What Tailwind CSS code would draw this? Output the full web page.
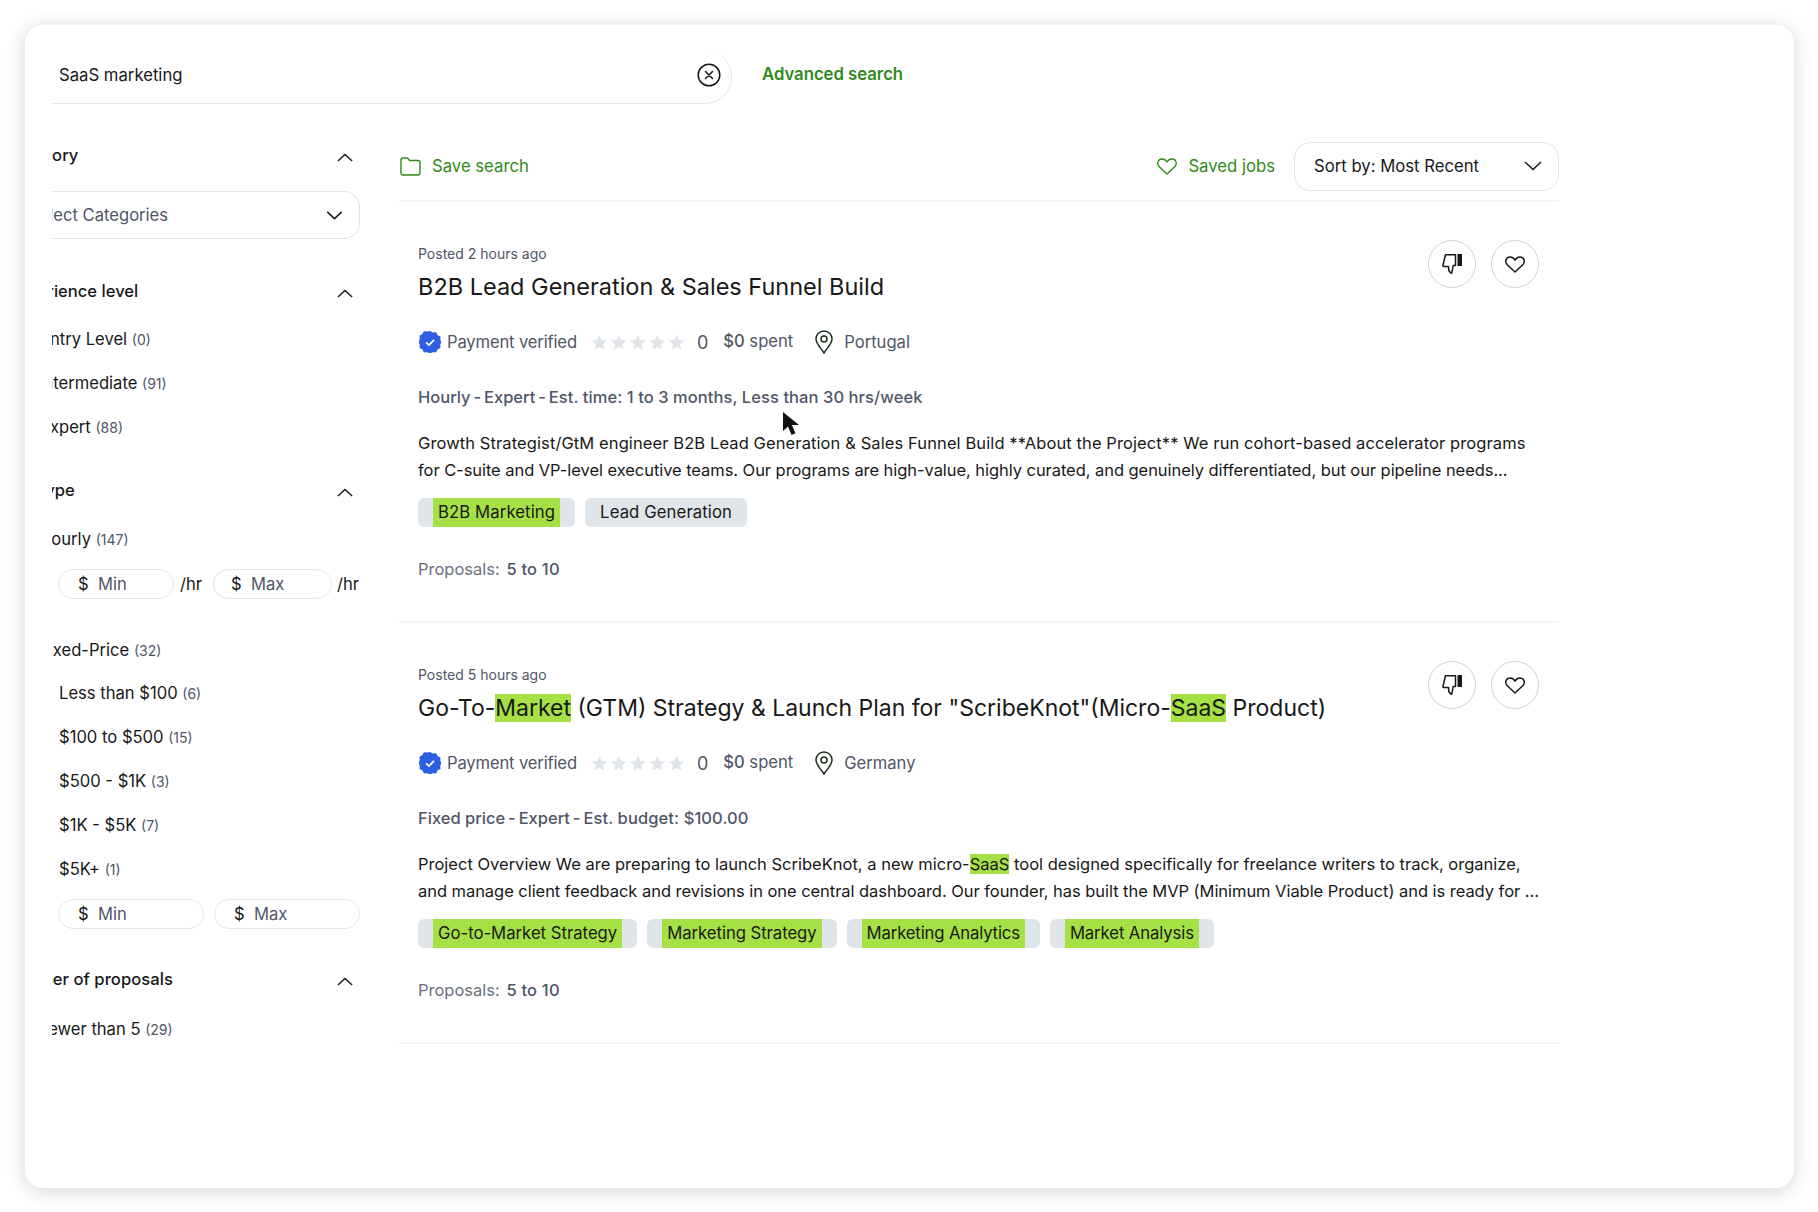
<!DOCTYPE html>
<html lang="en">
<head>
    <meta charset="UTF-8">
    <title>Job search</title>
    <script src="https://cdn.jsdelivr.net/npm/@tailwindcss/browser@4"></script>
</head>
<body class="bg-white font-[Inter,sans-serif] text-[#181818] overflow-hidden">
<div class="relative w-[1818px] h-[1212px] pt-[25px] pl-[25px]">
    <div class="w-[1769px] h-[1163px] bg-white rounded-[18px] shadow-[0_3px_20px_rgba(0,0,0,0.17)] pl-[27px]">

        <!-- Search -->
        <div class="pt-[25px] flex items-start">
            <div class="w-[680px] h-[54px] pb-[3px] border-b border-r border-[#e4e6ea] rounded-br-[28px] rounded-tr-[28px] flex items-center justify-between pl-[7px] pr-[10px]">
                <span class="text-[16.7px] translate-y-[1px]">SaaS marketing</span>
                <svg class="w-[24px] h-[24px]" viewBox="0 0 24 24" fill="none" stroke="#181818" stroke-width="1.5" stroke-linecap="round"><circle cx="12" cy="12" r="10.8"/><path d="M8.500 8.500l7 7M15.500 8.500l-7 7"/></svg>
            </div>
            <a class="ml-[30px] h-[50px] flex items-center text-[16.7px] font-semibold text-[#2f8a1a]">Advanced search</a>
        </div>

        <div class="flex">
            <!-- Filters -->
            <aside class="w-[308px] overflow-hidden shrink-0 pt-[39px] text-[16.6px]">
                <div class="h-6 flex items-center justify-between pr-[7px]">
                    <span class="-ml-[47px] font-medium">Category</span>
                    <svg class="w-[16px] h-[9px] translate-y-[2px]" viewBox="0 0 18 10" fill="none" stroke="#181818" stroke-width="1.600"><path d="M1 9l8-7.500L17 9"/></svg>
                </div>
                <div class="mt-6 h-[48px] border border-l-0 border-[#e4e6ea] rounded-r-2xl flex items-center justify-between pr-[16px] text-[#4f5668]">
                    <span class="-ml-[23px]">Select Categories</span>
                    <svg class="w-[17px] h-[9px]" viewBox="0 0 18 10" fill="none" stroke="#181818" stroke-width="1.600"><path d="M1 1l8 7.500L17 1"/></svg>
                </div>

                <div class="mt-[40px] h-6 flex items-center justify-between pr-[7px]">
                    <span class="-ml-[44px] font-medium">Experience level</span>
                    <svg class="w-[16px] h-[9px] translate-y-[2px]" viewBox="0 0 18 10" fill="none" stroke="#181818" stroke-width="1.600"><path d="M1 9l8-7.500L17 9"/></svg>
                </div>
                <div class="mt-6 h-6 flex items-center"><span class="-ml-[12px]">Entry Level <span class="text-[14px] text-[#4f5668]">(0)</span></span></div>
                <div class="mt-5 h-6 flex items-center"><span class="-ml-[13px]">Intermediate <span class="text-[14px] text-[#4f5668]">(91)</span></span></div>
                <div class="mt-5 h-6 flex items-center"><span class="-ml-[12px]">Expert <span class="text-[14px] text-[#4f5668]">(88)</span></span></div>

                <div class="mt-[39px] h-6 flex items-center justify-between pr-[7px]">
                    <span class="-ml-[47px] font-medium">Job type</span>
                    <svg class="w-[16px] h-[9px] translate-y-[2px]" viewBox="0 0 18 10" fill="none" stroke="#181818" stroke-width="1.600"><path d="M1 9l8-7.500L17 9"/></svg>
                </div>
                <div class="mt-[25px] h-6 flex items-center"><span class="-ml-[13px]">Hourly <span class="text-[14px] text-[#4f5668]">(147)</span></span></div>
                <div class="mt-[18px] pl-[6px] flex items-center h-[30px]">
                    <div class="w-[116px] h-[30px] border border-[#e4e6ea] rounded-full flex items-center pl-[19px] text-[#4f5668]"><span class="text-[#181818] w-[20px]">$</span>Min</div>
                    <span class="ml-[6px] w-[33px]">/hr</span>
                    <div class="w-[119px] h-[30px] border border-[#e4e6ea] rounded-full flex items-center pl-[17px] text-[#4f5668]"><span class="text-[#181818] w-[20px]">$</span>Max</div>
                    <span class="ml-[5px]">/hr</span>
                </div>
                <div class="mt-[39px] h-6 flex items-center"><span class="-ml-[13px]">Fixed-Price <span class="text-[14px] text-[#4f5668]">(32)</span></span></div>
                <div class="mt-[19px] h-6 flex items-center pl-[7px]"><span>Less than $100 <span class="text-[14px] text-[#4f5668]">(6)</span></span></div>
                <div class="mt-5 h-6 flex items-center pl-[7px]"><span>$100 to $500 <span class="text-[14px] text-[#4f5668]">(15)</span></span></div>
                <div class="mt-5 h-6 flex items-center pl-[7px]"><span>$500 - $1K <span class="text-[14px] text-[#4f5668]">(3)</span></span></div>
                <div class="mt-5 h-6 flex items-center pl-[7px]"><span>$1K - $5K <span class="text-[14px] text-[#4f5668]">(7)</span></span></div>
                <div class="mt-5 h-6 flex items-center pl-[7px]"><span>$5K+ <span class="text-[14px] text-[#4f5668]">(1)</span></span></div>
                <div class="mt-[18px] pl-[6px] flex items-center gap-[10px] h-[30px]">
                    <div class="w-[146px] h-[30px] border border-[#e4e6ea] rounded-full flex items-center pl-[19px] text-[#4f5668]"><span class="text-[#181818] w-[20px]">$</span>Min</div>
                    <div class="w-[146px] h-[30px] border border-[#e4e6ea] rounded-full flex items-center pl-[19px] text-[#4f5668]"><span class="text-[#181818] w-[20px]">$</span>Max</div>
                </div>
                <div class="mt-[38px] h-6 flex items-center justify-between pr-[7px]">
                    <span class="-ml-[47px] font-medium tracking-[0.05px]">Number of proposals</span>
                    <svg class="w-[16px] h-[9px] translate-y-[2px]" viewBox="0 0 18 10" fill="none" stroke="#181818" stroke-width="1.600"><path d="M1 9l8-7.500L17 9"/></svg>
                </div>
                <div class="mt-[26px] h-6 flex items-center"><span class="-ml-[13px]">Fewer than 5 <span class="text-[14px] text-[#4f5668]">(29)</span></span></div>
            </aside>

            <!-- Results -->
            <main class="ml-[39px] w-[1160px] shrink-0">
                <div class="mt-[38px] h-[60px] pb-[10px] border-b-2 border-[#f4f4f5] flex items-center text-[16.7px] text-[#2f8a1a]">
                    <svg class="w-[21px] h-[19px] ml-[1px]" viewBox="0 0 21 19" fill="none" stroke="#2f8a1a" stroke-width="1.400" stroke-linejoin="round"><path d="M1 3.200C1 1.900 1.800 1 3 1h3.600c.9 0 1.500.4 2 1.100l.9 1.400H18c1.200 0 2 .8 2 2V15.600c0 1.400-.9 2.400-2.300 2.400H3.300C1.900 18 1 17 1 15.600V3.200z"/></svg>
                    <span class="ml-[11px] translate-y-[1px]">Save search</span>
                    <svg class="ml-auto w-[20px] h-[17px]" viewBox="0 0 20 17" fill="none" stroke="#2f8a1a" stroke-width="1.400" stroke-linejoin="round"><path d="M10 16L2 8.500C-.5 5.500 1 1 5 1c2.300 0 4 1.300 5 3 1-1.700 2.700-3 5-3 4 0 5.500 4.500 3 7.500L10 16z"/></svg>
                    <span class="ml-[11px] translate-y-[1px]">Saved jobs</span>
                    <div class="ml-[19px] w-[265px] h-[49px] border border-[#e4e6ea] rounded-2xl flex items-center justify-between pl-[19px] pr-[16px] text-[#181818]">
                        <span class="translate-y-[1px]">Sort by: Most Recent</span>
                        <svg class="w-[18px] h-[10px]" viewBox="0 0 18 10" fill="none" stroke="#181818" stroke-width="1.500"><path d="M1 1l8 7.500L17 1"/></svg>
                    </div>
                </div>

                <!-- Job 1 -->
                <article class="h-[421px] border-b-2 border-[#f4f4f5] pt-[38px] pl-[19px] pr-[20px]">
                    <div class="flex justify-between h-[64px]">
                        <div class="pt-[4px]">
                            <p class="h-5 leading-5 text-[14px] text-[#4f5668]">Posted 2 hours ago</p>
                            <h2 class="mt-[6px] h-[34px] leading-[34px] text-[23.5px]">B2B Lead Generation &amp; Sales Funnel Build</h2>
                        </div>
                        <div class="flex gap-[15px]">
                            <div class="w-[48px] h-[48px] rounded-full border border-[#cdd3db] flex items-center justify-center"><svg class="w-[20px] h-[21px]" viewBox="0 0 20 21" fill="none" stroke="#181818" stroke-width="1.500" stroke-linejoin="round"><path d="M3.500.8H13.500V11.500H11.200c-.6 2.500-.7 4.500-1.600 7.800-1.500-.6-3-2.400-3-4.500V12.400H1.600c-.5 0-.8-.4-.7-.9L3.500.8z"/><rect x="15.500" y="0" width="4.500" height="12" fill="#181818" stroke="none"/></svg></div>
                            <div class="w-[48px] h-[48px] rounded-full border border-[#cdd3db] flex items-center justify-center"><svg class="w-[20px] h-[17px]" viewBox="0 0 20 17" fill="none" stroke="#181818" stroke-width="1.500" stroke-linejoin="round"><path d="M10 16L2 8.500C-.5 5.500 1 1 5 1c2.300 0 4 1.300 5 3 1-1.700 2.700-3 5-3 4 0 5.500 4.500 3 7.500L10 16z"/></svg></div>
                        </div>
                    </div>
                    <div class="mt-[26px] h-6 flex items-center text-[16.6px] text-[#4f5668]">
                        <svg class="w-[22px] h-[22px] ml-[1px]" viewBox="0 0 22 22"><path fill="#2d5fe3" stroke="#2d5fe3" stroke-width="2" stroke-linejoin="round" d="M11 1l2.600 1.500 3-.3 1.200 2.700 2.700 1.300-.3 3L21.500 11l-1.300 2.500.3 2.900-2.700 1.300-1.200 2.700-3-.3L11 21.500l-2.600-1.400-3 .3-1.200-2.700-2.700-1.300.3-2.900L.5 11l1.300-2.800-.3-3 2.700-1.300 1.200-2.700 3 .3z"/><path d="M7 11.300l3 2.800 5-5.300" fill="none" stroke="#fff" stroke-width="1.800"/></svg>
                        <span class="ml-[6px] -tracking-[0.15px]">Payment verified</span>
                        <svg class="ml-[14px] w-[93px] h-[17px]" viewBox="0 0 94 17" fill="#e0e5ea"><path d="M8.500 1l2.300 5 5.400.6-4 3.700 1.100 5.400-4.800-2.700-4.800 2.700 1.100-5.400-4-3.700 5.400-.6z"/><path transform="translate(19.500)" d="M8.500 1l2.300 5 5.400.6-4 3.700 1.100 5.400-4.800-2.700-4.800 2.700 1.100-5.400-4-3.700 5.400-.6z"/><path transform="translate(39)" d="M8.500 1l2.300 5 5.400.6-4 3.700 1.100 5.400-4.800-2.700-4.800 2.700 1.100-5.400-4-3.700 5.400-.6z"/><path transform="translate(58.500)" d="M8.500 1l2.300 5 5.400.6-4 3.700 1.100 5.400-4.800-2.700-4.800 2.700 1.100-5.400-4-3.700 5.400-.6z"/><path transform="translate(78)" d="M8.500 1l2.300 5 5.400.6-4 3.700 1.100 5.400-4.800-2.700-4.800 2.700 1.100-5.400-4-3.700 5.400-.6z"/></svg>
                        <span class="ml-[13px] text-[18px]">0</span>
                        <span class="ml-[15px] -translate-y-[1px]"><b class="font-medium">$0</b> spent</span>
                        <svg class="ml-[22px] w-[18px] h-[24px]" viewBox="0 0 18 24" fill="none" stroke="#1c2b1c" stroke-width="1.500"><path d="M9 23C6 18 1 14 1 9a8 8 0 0116 0c0 5-5 9-8 14z"/><circle cx="9" cy="9" r="3"/></svg>
                        <span class="ml-[11px]">Portugal</span>
                    </div>
                    <p class="mt-[31px] h-6 leading-6 text-[16.5px] font-medium text-[#4f5668] whitespace-nowrap">Hourly<span class="-mx-[1.5px]"> - </span>Expert<span class="-mx-[1.5px]"> - </span><span class="tracking-[0.07px]">Est. time: 1 to 3 months, Less than 30 hrs/week</span></p>
                    <p class="mt-[21px] leading-[27px] text-[16.5px] whitespace-nowrap"><span class="tracking-[0.1px]">Growth Strategist/GtM engineer B2B Lead Generation &amp; Sales Funnel Build **About the Project** We run cohort-based accelerator programs</span><br><span class="-tracking-[0.06px]">for C-suite and VP-level executive teams. Our programs are high-value, highly curated, and genuinely differentiated, but our pipeline needs...</span></p>
                    <div class="mt-[14px] flex gap-[10px] text-[16.7px] h-[29px] leading-[29px]">
                        <span class="bg-[#e0e5ea] rounded-md px-[15px]"><mark class="bg-[#a5e044] text-inherit block px-[5px] tracking-[0.1px]">B2B Marketing</mark></span>
                        <span class="bg-[#e0e5ea] rounded-md px-[15px] tracking-[0.1px]">Lead Generation</span>
                    </div>
                    <p class="mt-[30px] h-6 leading-6 text-[16.5px] text-[#6b7280]">Proposals: <b class="ml-[2px] font-medium text-[#4f5668] tracking-[0.2px]">5 to 10</b></p>
                </article>

                <!-- Job 2 -->
                <article class="h-[421px] border-b-2 border-[#f4f4f5] pt-[38px] pl-[19px] pr-[20px]">
                    <div class="flex justify-between h-[64px]">
                        <div class="pt-[4px]">
                            <p class="h-5 leading-5 text-[14px] text-[#4f5668]">Posted 5 hours ago</p>
                            <h2 class="mt-[6px] h-[34px] leading-[34px] text-[23px] whitespace-nowrap">Go-To-<mark class="bg-[#a5e044] text-inherit">Market</mark> (GTM) Strategy &amp; Launch Plan for "ScribeKnot"(Micro-<mark class="bg-[#a5e044] text-inherit">SaaS</mark> Product)</h2>
                        </div>
                        <div class="flex gap-[15px]">
                            <div class="w-[48px] h-[48px] rounded-full border border-[#cdd3db] flex items-center justify-center"><svg class="w-[20px] h-[21px]" viewBox="0 0 20 21" fill="none" stroke="#181818" stroke-width="1.500" stroke-linejoin="round"><path d="M3.500.8H13.500V11.500H11.200c-.6 2.500-.7 4.500-1.600 7.800-1.500-.6-3-2.400-3-4.500V12.400H1.600c-.5 0-.8-.4-.7-.9L3.500.8z"/><rect x="15.500" y="0" width="4.500" height="12" fill="#181818" stroke="none"/></svg></div>
                            <div class="w-[48px] h-[48px] rounded-full border border-[#cdd3db] flex items-center justify-center"><svg class="w-[20px] h-[17px]" viewBox="0 0 20 17" fill="none" stroke="#181818" stroke-width="1.500" stroke-linejoin="round"><path d="M10 16L2 8.500C-.5 5.500 1 1 5 1c2.300 0 4 1.300 5 3 1-1.700 2.700-3 5-3 4 0 5.500 4.500 3 7.500L10 16z"/></svg></div>
                        </div>
                    </div>
                    <div class="mt-[26px] h-6 flex items-center text-[16.6px] text-[#4f5668]">
                        <svg class="w-[22px] h-[22px] ml-[1px]" viewBox="0 0 22 22"><path fill="#2d5fe3" stroke="#2d5fe3" stroke-width="2" stroke-linejoin="round" d="M11 1l2.600 1.500 3-.3 1.200 2.700 2.700 1.300-.3 3L21.500 11l-1.300 2.500.3 2.900-2.700 1.300-1.200 2.700-3-.3L11 21.500l-2.600-1.400-3 .3-1.200-2.700-2.700-1.300.3-2.900L.5 11l1.300-2.800-.3-3 2.700-1.300 1.200-2.700 3 .3z"/><path d="M7 11.300l3 2.800 5-5.300" fill="none" stroke="#fff" stroke-width="1.800"/></svg>
                        <span class="ml-[6px] -tracking-[0.15px]">Payment verified</span>
                        <svg class="ml-[14px] w-[93px] h-[17px]" viewBox="0 0 94 17" fill="#e0e5ea"><path d="M8.500 1l2.300 5 5.400.6-4 3.700 1.100 5.400-4.800-2.700-4.800 2.700 1.100-5.400-4-3.700 5.400-.6z"/><path transform="translate(19.500)" d="M8.500 1l2.300 5 5.400.6-4 3.700 1.100 5.400-4.800-2.700-4.800 2.700 1.100-5.400-4-3.700 5.400-.6z"/><path transform="translate(39)" d="M8.500 1l2.300 5 5.400.6-4 3.700 1.100 5.400-4.800-2.700-4.800 2.700 1.100-5.400-4-3.700 5.400-.6z"/><path transform="translate(58.500)" d="M8.500 1l2.300 5 5.400.6-4 3.700 1.100 5.400-4.800-2.700-4.800 2.700 1.100-5.400-4-3.700 5.400-.6z"/><path transform="translate(78)" d="M8.500 1l2.300 5 5.400.6-4 3.700 1.100 5.400-4.800-2.700-4.800 2.700 1.100-5.400-4-3.700 5.400-.6z"/></svg>
                        <span class="ml-[13px] text-[18px]">0</span>
                        <span class="ml-[15px] -translate-y-[1px]"><b class="font-medium">$0</b> spent</span>
                        <svg class="ml-[22px] w-[18px] h-[24px]" viewBox="0 0 18 24" fill="none" stroke="#1c2b1c" stroke-width="1.500"><path d="M9 23C6 18 1 14 1 9a8 8 0 0116 0c0 5-5 9-8 14z"/><circle cx="9" cy="9" r="3"/></svg>
                        <span class="ml-[11px]">Germany</span>
                    </div>
                    <p class="mt-[31px] h-6 leading-6 text-[16.5px] font-medium text-[#4f5668] whitespace-nowrap">Fixed price<span class="-mx-[1.5px]"> - </span>Expert<span class="-mx-[1.5px]"> - </span><span class="tracking-[0.1px]">Est. budget: $100.00</span></p>
                    <p class="mt-[21px] leading-[27px] text-[16.5px] whitespace-nowrap">Project Overview We are preparing to launch ScribeKnot, a new micro-<mark class="bg-[#a5e044] text-inherit">SaaS</mark> tool designed specifically for freelance writers to track, organize,<br><span class="-tracking-[0.05px]">and manage client feedback and revisions in one central dashboard. Our founder, has built the MVP (Minimum Viable Product) and is ready for ...</span></p>
                    <div class="mt-[14px] flex gap-[10px] text-[16.7px] h-[29px] leading-[29px]">
                        <span class="bg-[#e0e5ea] rounded-md px-[15px]"><mark class="bg-[#a5e044] text-inherit block px-[5px]">Go-to-Market Strategy</mark></span>
                        <span class="bg-[#e0e5ea] rounded-md px-[15px]"><mark class="bg-[#a5e044] text-inherit block px-[5px] -tracking-[0.05px]">Marketing Strategy</mark></span>
                        <span class="bg-[#e0e5ea] rounded-md px-[15px]"><mark class="bg-[#a5e044] text-inherit block px-[5px] -tracking-[0.15px]">Marketing Analytics</mark></span>
                        <span class="bg-[#e0e5ea] rounded-md px-[15px]"><mark class="bg-[#a5e044] text-inherit block px-[5px] -tracking-[0.1px]">Market Analysis</mark></span>
                    </div>
                    <p class="mt-[30px] h-6 leading-6 text-[16.5px] text-[#6b7280]">Proposals: <b class="ml-[2px] font-medium text-[#4f5668] tracking-[0.2px]">5 to 10</b></p>
                </article>
            </main>
        </div>
    </div>

    <!-- Mouse cursor -->
    <svg class="absolute left-[782px] top-[411px] w-[20px] h-[27px]" viewBox="0 0 20 27" fill="#111"><path d="M1 1v19l5-4.500 3.500 8.500 4-1.800-3.600-8.200H17z"/></svg>
</div>
</body>
</html>
